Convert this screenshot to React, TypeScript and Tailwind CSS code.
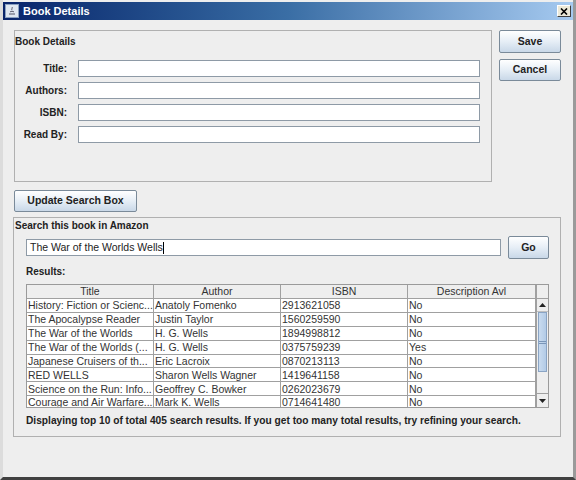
import React from "react";

const rows: [string, string, string, string][] = [
  ["History: Fiction or Scienc...", "Anatoly Fomenko", "2913621058", "No"],
  ["The Apocalypse Reader", "Justin Taylor", "1560259590", "No"],
  ["The War of the Worlds", "H. G. Wells", "1894998812", "No"],
  ["The War of the Worlds (...", "H. G. Wells", "0375759239", "Yes"],
  ["Japanese Cruisers of th...", "Eric Lacroix", "0870213113", "No"],
  ["RED WELLS", "Sharon Wells Wagner", "1419641158", "No"],
  ["Science on the Run: Info...", "Geoffrey C. Bowker", "0262023679", "No"],
  ["Courage and Air Warfare...", "Mark K. Wells", "0714641480", "No"],
];

const btn =
  "flex items-center justify-center border border-[#7a8a99] rounded-[2px] bg-gradient-to-b from-[#ffffff] via-[#e6eef6] to-[#c9d8e8] text-[10.5px] font-bold text-[#222]";

function Field({ label }: { label: string }) {
  return (
    <div className="flex items-center h-[17px] mb-[5px]">
      <div className="w-[52px] text-right font-bold text-[10px] text-[#222]">{label}</div>
      <div className="ml-[11px] w-[402px] h-[17px] bg-white border border-[#8e9aa6]" />
    </div>
  );
}

export default function App() {
  return (
    <div
      className="w-[576px] h-[480px] bg-[#eeeeee] relative overflow-hidden border-l-[3px] border-r-[3px] border-b-[3px] border-l-[#dcdcdc] border-r-[#9a9a9a] border-b-[#404040]"
      style={{ fontFamily: '"Liberation Sans", Arial, sans-serif' }}
    >
      {/* Title bar */}
      <div className="mt-[2px] h-[18px] flex items-center bg-gradient-to-r from-[#0a246a] via-[#3a6ea5] to-[#a6caf0]">
        <div className="w-[14px] h-[14px] ml-[2px] bg-[#dfe6f0] border border-[#8aa0c0] flex items-center justify-center">
          <svg width="10" height="10" viewBox="0 0 10 10">
            <path d="M2 8h6M3 6c1-1 3-1 4 0M5 1c1 1-1 2 0 3" stroke="#556" strokeWidth="1" fill="none" />
          </svg>
        </div>
        <div className="ml-[4px] text-white font-bold text-[11px]">Book Details</div>
        <div className="ml-auto mr-[2px] w-[14px] h-[12px] bg-[#ece9d8] border border-t-white border-l-white border-r-[#404040] border-b-[#404040] flex items-center justify-center">
          <svg width="8" height="7" viewBox="0 0 8 7">
            <path d="M1 0.5L7 6.5M7 0.5L1 6.5" stroke="#000" strokeWidth="1.6" />
          </svg>
        </div>
      </div>

      <div className="pl-[11px] pt-[10px]">
        <div className="flex">
          {/* Book details panel */}
          <div className="w-[478px] h-[152px] border border-[#b0b0b0]">
            <div className="font-bold text-[10px] text-[#222] mt-[3px]">Book Details</div>
            <div className="mt-[11px]">
              <Field label="Title:" />
              <Field label="Authors:" />
              <Field label="ISBN:" />
              <Field label="Read By:" />
            </div>
          </div>
          <div className="ml-[7px] flex flex-col">
            <div className={`${btn} w-[62px] h-[23px]`}>Save</div>
            <div className={`${btn} w-[62px] h-[22px] mt-[6px]`}>Cancel</div>
          </div>
        </div>

        <div className={`${btn} w-[123px] h-[22px] mt-[8px]`}>Update Search Box</div>

        <div className="mt-[5px] w-[548px] h-[220px] border border-[#b0b0b0] -ml-[1px]">
          <div className="font-bold text-[10px] text-[#222] ml-[1px]">Search this book in Amazon</div>
          <div className="flex items-center mt-[3px] ml-[12px]">
            <div className="w-[475px] h-[17px] bg-white border border-[#8e9aa6] flex items-center px-[3px] text-[10.5px] text-[#222]">
              The War of the Worlds Wells<span className="w-[1px] h-[12px] bg-black" />
            </div>
            <div className={`${btn} w-[41px] h-[23px] ml-[7px]`}>Go</div>
          </div>
          <div className="font-bold text-[10px] text-[#222] ml-[12px] mt-[5px]">Results:</div>
          <div className="ml-[12px] mt-[5px] w-[523px] h-[124px] border border-[#9a9a9a] flex bg-white overflow-hidden">
            <div className="w-[509px] flex flex-col">
              <div className="flex h-[14px] shrink-0 bg-[#eeeeee] border-b border-[#a0a0a0] text-[10.5px] text-[#333]">
                {["Title", "Author", "ISBN", "Description Avl"].map((h, i) => (
                  <div
                    key={h}
                    className={`${i < 3 ? "w-[127px]" : "w-[128px]"} border-r border-[#a0a0a0] flex items-center justify-center leading-none`}
                  >
                    {h}
                  </div>
                ))}
              </div>
              {rows.map((r, ri) => (
                <div key={ri} className="flex h-[13.9px] shrink-0 border-b border-[#a0a0a0] text-[10.5px] text-[#333]">
                  {r.map((c, i) => (
                    <div
                      key={i}
                      className={`${i < 3 ? "w-[127px]" : "w-[128px]"} border-r border-[#a0a0a0] px-[1px] flex items-center leading-none whitespace-nowrap overflow-hidden`}
                    >
                      {c}
                    </div>
                  ))}
                </div>
              ))}
            </div>
            {/* Scrollbar */}
            <div className="w-[14px] bg-[#eeeeee] border-l border-[#a0a0a0] flex flex-col">
              <div className="h-[14px] border-b border-[#a0a0a0]" />
              <div className="h-[13px] flex items-center justify-center border-b border-[#c0c0c0]">
                <svg width="7" height="4" viewBox="0 0 7 4"><path d="M0 4L3.5 0L7 4Z" fill="#222" /></svg>
              </div>
              <div className="h-[60px] mx-[1px] bg-gradient-to-r from-[#c9dbef] to-[#b3cbe6] border border-[#8aa4c4] flex items-center justify-center">
                <div className="w-[7px] h-[3px] border-t border-b border-[#7a96b8]" />
              </div>
              <div className="flex-1" />
              <div className="h-[14px] flex items-center justify-center border-t border-[#a0a0a0]">
                <svg width="7" height="4" viewBox="0 0 7 4"><path d="M0 0L3.5 4L7 0Z" fill="#222" /></svg>
              </div>
            </div>
          </div>
          <div className="font-bold text-[10.2px] text-[#222] ml-[12px] mt-[5px] whitespace-nowrap">
            Displaying top 10 of total 405 search results. If you get too many total results, try refining your search.
          </div>
        </div>
      </div>
    </div>
  );
}
